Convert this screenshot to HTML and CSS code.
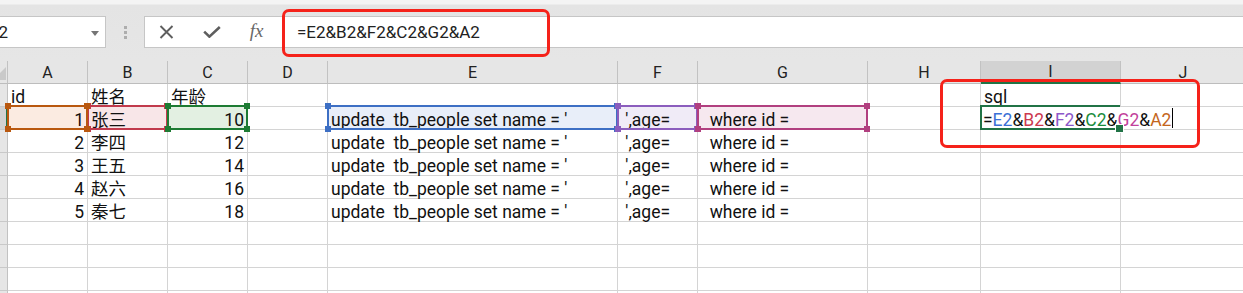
FILE: index.html
```html
<!DOCTYPE html>
<html lang="zh-CN">
<head>
    <meta charset="UTF-8">
    <meta name="viewport" content="width=device-width, initial-scale=1.0">
    <title>拼接 SQL - Excel</title>
    <link rel="stylesheet" href="styles.css">
</head>
<body>
    <div id="toolbar">
        <div class="namebox">
            <span class="name">I2</span>
            <span class="drop"></span>
        </div>
        <div class="grip"><i></i><i></i><i></i></div>
        <div class="formula">
            <span class="slot">
                <svg width="15" height="14" viewBox="0 0 15 14"><path d="M1.5 1 L13.5 13 M13.5 1 L1.5 13" stroke="#5e5e5e" stroke-width="1.9" fill="none"/></svg>
            </span>
            <span class="slot">
                <svg width="18" height="12" viewBox="0 0 18 12"><path d="M1.2 5.6 L6.4 10.6 L16.8 1" stroke="#5e5e5e" stroke-width="2.6" fill="none"/></svg>
            </span>
            <span class="slot fx">fx</span>
            <span class="ftext">=E2&amp;B2&amp;F2&amp;C2&amp;G2&amp;A2</span>
        </div>
    </div>

    <div id="sheet">
        <div class="c corner"></div>
        <div class="c hd">A</div>
        <div class="c hd">B</div>
        <div class="c hd">C</div>
        <div class="c hd">D</div>
        <div class="c hd">E</div>
        <div class="c hd">F</div>
        <div class="c hd">G</div>
        <div class="c hd">H</div>
        <div class="c hd sel">I</div>
        <div class="c hd">J</div>

        <div class="c rh"></div>
        <div class="c">id</div>
        <div class="c">姓名</div>
        <div class="c">年龄</div>
        <div class="c"></div>
        <div class="c"></div>
        <div class="c"></div>
        <div class="c"></div>
        <div class="c"></div>
        <div class="c">sql</div>
        <div class="c"></div>

        <div class="c rh sel"></div>
        <div class="c num ref ref-a">1</div>
        <div class="c ref ref-b">张三</div>
        <div class="c num ref ref-c">10</div>
        <div class="c"></div>
        <div class="c ref ref-e">update  tb_people set name = '</div>
        <div class="c ref ref-f"> ',age=</div>
        <div class="c ref ref-g">  where id =</div>
        <div class="c"></div>
        <div class="c active">
            <span class="editor"><span>=<b class="k-e">E2</b>&amp;<b class="k-b">B2</b>&amp;<b class="k-f">F2</b>&amp;<b class="k-c">C2</b>&amp;<b class="k-g">G2</b>&amp;<b class="k-a">A2</b></span><span class="caret"></span></span>
        </div>
        <div class="c"></div>

        <div class="c rh"></div>
        <div class="c num">2</div>
        <div class="c">李四</div>
        <div class="c num">12</div>
        <div class="c"></div>
        <div class="c">update  tb_people set name = '</div>
        <div class="c"> ',age=</div>
        <div class="c">  where id =</div>
        <div class="c"></div>
        <div class="c"></div>
        <div class="c"></div>

        <div class="c rh"></div>
        <div class="c num">3</div>
        <div class="c">王五</div>
        <div class="c num">14</div>
        <div class="c"></div>
        <div class="c">update  tb_people set name = '</div>
        <div class="c"> ',age=</div>
        <div class="c">  where id =</div>
        <div class="c"></div>
        <div class="c"></div>
        <div class="c"></div>

        <div class="c rh"></div>
        <div class="c num">4</div>
        <div class="c">赵六</div>
        <div class="c num">16</div>
        <div class="c"></div>
        <div class="c">update  tb_people set name = '</div>
        <div class="c"> ',age=</div>
        <div class="c">  where id =</div>
        <div class="c"></div>
        <div class="c"></div>
        <div class="c"></div>

        <div class="c rh"></div>
        <div class="c num">5</div>
        <div class="c">秦七</div>
        <div class="c num">18</div>
        <div class="c"></div>
        <div class="c">update  tb_people set name = '</div>
        <div class="c"> ',age=</div>
        <div class="c">  where id =</div>
        <div class="c"></div>
        <div class="c"></div>
        <div class="c"></div>

        <div class="c rh"></div>
        <div class="c"></div><div class="c"></div><div class="c"></div><div class="c"></div><div class="c"></div>
        <div class="c"></div><div class="c"></div><div class="c"></div><div class="c"></div><div class="c"></div>

        <div class="c rh"></div>
        <div class="c"></div><div class="c"></div><div class="c"></div><div class="c"></div><div class="c"></div>
        <div class="c"></div><div class="c"></div><div class="c"></div><div class="c"></div><div class="c"></div>

        <div class="c rh"></div>
        <div class="c"></div><div class="c"></div><div class="c"></div><div class="c"></div><div class="c"></div>
        <div class="c"></div><div class="c"></div><div class="c"></div><div class="c"></div><div class="c"></div>

        <div class="c rh"></div>
        <div class="c"></div><div class="c"></div><div class="c"></div><div class="c"></div><div class="c"></div>
        <div class="c"></div><div class="c"></div><div class="c"></div><div class="c"></div><div class="c"></div>
    </div>

    <div class="mark" id="markBar"></div>
    <div class="mark" id="markCell"></div>
</body>
</html>
```

FILE: styles.css
```css
* {
    box-sizing: border-box;
}
html, body {
    margin: 0;
    padding: 0;
    height: 100%;
    overflow: hidden;
    background: #fff;
}
body {
    position: relative;
    font-family: Roboto, "Noto Sans CJK SC", sans-serif;
    color: #111;
}

/* formula bar */
#toolbar {
    height: 61px;
    padding-top: 16px;
    display: flex;
    align-items: flex-start;
    background: linear-gradient(#f4f4f4 0, #f4f4f4 4px, #e4e4e4 5px, #e6e6e6 100%);
}
.namebox {
    position: relative;
    width: 107px;
    height: 32px;
    margin-left: -1px;
    background: #fff;
    border: 1px solid #c6c6c6;
    display: flex;
    align-items: center;
    overflow: hidden;
}
.name {
    margin-left: -6px;
    font-size: 17px;
    color: #222;
}
.drop {
    position: absolute;
    right: 6px;
    top: 14px;
    border: 4px solid transparent;
    border-top: 5px solid #757575;
    border-bottom: 0;
}
.grip {
    width: 38px;
    height: 32px;
    display: flex;
    flex-direction: column;
    align-items: center;
    justify-content: center;
    gap: 2px;
}
.grip i {
    width: 3px;
    height: 3px;
    background: #adadad;
}
.formula {
    flex: 1;
    height: 32px;
    margin-right: -2px;
    background: #fff;
    border: 1px solid #c6c6c6;
    display: flex;
    align-items: center;
}
.slot {
    width: 45px;
    display: flex;
    justify-content: center;
}
.slot:first-child {
    margin-left: -1px;
}
.fx {
    font-family: "Liberation Serif", serif;
    font-style: italic;
    font-size: 19px;
    color: #686868;
    margin-top: -2px;
}
.ftext {
    margin-left: 18px;
    font-size: 17px;
    color: #222;
}

/* grid */
#sheet {
    position: relative;
    z-index: 0;
    display: grid;
    grid-template-columns: 8px 80px 80px 80px 80px 290px 80px 170px 113px 140px 125px;
    grid-auto-rows: 23px;
    font-size: 17.5px;
}
.c {
    position: relative;
    display: flex;
    align-items: flex-end;
    padding: 0 3px 1px;
    line-height: 16px;
    white-space: pre;
    border-right: 1px solid #d4d4d4;
    border-bottom: 1px solid #d4d4d4;
}
.num {
    justify-content: flex-end;
}
.hd, .corner {
    background: #e6e6e6;
    border-right-color: #c2c2c2;
    border-bottom-color: #bdbdbd;
    justify-content: center;
    padding-bottom: 2px;
    font-size: 16px;
    color: #222;
}
.corner {
    overflow: hidden;
}
.corner::after {
    content: '';
    position: absolute;
    right: 1px;
    bottom: 3px;
    border-left: 13px solid transparent;
    border-bottom: 13px solid #c9c9c9;
}
.hd.sel {
    background: #d2d2d2;
    border-bottom: 2px solid #217346;
}
.rh {
    background: #e6e6e6;
    border-right-color: #c2c2c2;
    border-bottom-color: #c9c9c9;
    padding: 0;
}
.rh.sel {
    background: #d2d2d2;
    border-right: 2px solid #217346;
}

/* formula reference ranges */
.ref::before {
    content: '';
    position: absolute;
    top: -2px;
    left: -1px;
    right: -1px;
    bottom: -1px;
    border: 2px solid var(--rc);
    z-index: var(--z);
}
.ref::after {
    content: '';
    position: absolute;
    top: -4px;
    left: -3px;
    right: -3px;
    bottom: -3px;
    z-index: var(--z);
    background:
        linear-gradient(var(--rc), var(--rc)) left top / 6px 6px no-repeat,
        linear-gradient(var(--rc), var(--rc)) right top / 6px 6px no-repeat,
        linear-gradient(var(--rc), var(--rc)) left bottom / 6px 6px no-repeat,
        linear-gradient(var(--rc), var(--rc)) right bottom / 6px 6px no-repeat;
}
.ref-e { --rc: #3d6fc4; --z: 1; background: #e8eef9; }
.ref-b { --rc: #c13a4c; --z: 2; background: #f8e6e8; }
.ref-f { --rc: #8b5dbd; --z: 3; background: #f0ebf7; }
.ref-c { --rc: #1d7b33; --z: 4; background: #e3f0e2; }
.ref-g { --rc: #b13f7f; --z: 5; background: #f6e8ef; }
.ref-a { --rc: #b9580f; --z: 6; background: #fbebe1; }

.k-e { color: #3a70d6; }
.k-b { color: #cc3a4f; }
.k-f { color: #8d58c9; }
.k-c { color: #1b8c3c; }
.k-g { color: #c2419b; }
.k-a { color: #c4661c; }
.editor b {
    font-weight: normal;
}

/* active cell in edit mode */
.active::before {
    content: '';
    position: absolute;
    top: -2px;
    left: -1px;
    right: 0;
    bottom: -1px;
    border: 2px solid #217346;
    border-right: 0;
    z-index: 12;
}
.active::after {
    content: '';
    position: absolute;
    right: -4px;
    bottom: -4px;
    width: 7px;
    height: 7px;
    background: #217346;
    border: 1px solid #fff;
    z-index: 13;
}
.editor {
    position: absolute;
    left: 0;
    top: 0;
    bottom: 1px;
    display: flex;
    align-items: flex-end;
    padding: 0 3px 0 2px;
    background: #fff;
    z-index: 11;
}
.caret {
    width: 1px;
    height: 20px;
    margin-left: 1px;
    background: #000;
}

/* red annotation boxes */
.mark {
    position: absolute;
    border: 3px solid #f5221a;
    border-radius: 7px;
    z-index: 20;
}
#markBar {
    left: 282px;
    top: 9px;
    width: 268px;
    height: 48px;
}
#markCell {
    left: 940px;
    top: 79px;
    width: 260px;
    height: 69px;
}
```
